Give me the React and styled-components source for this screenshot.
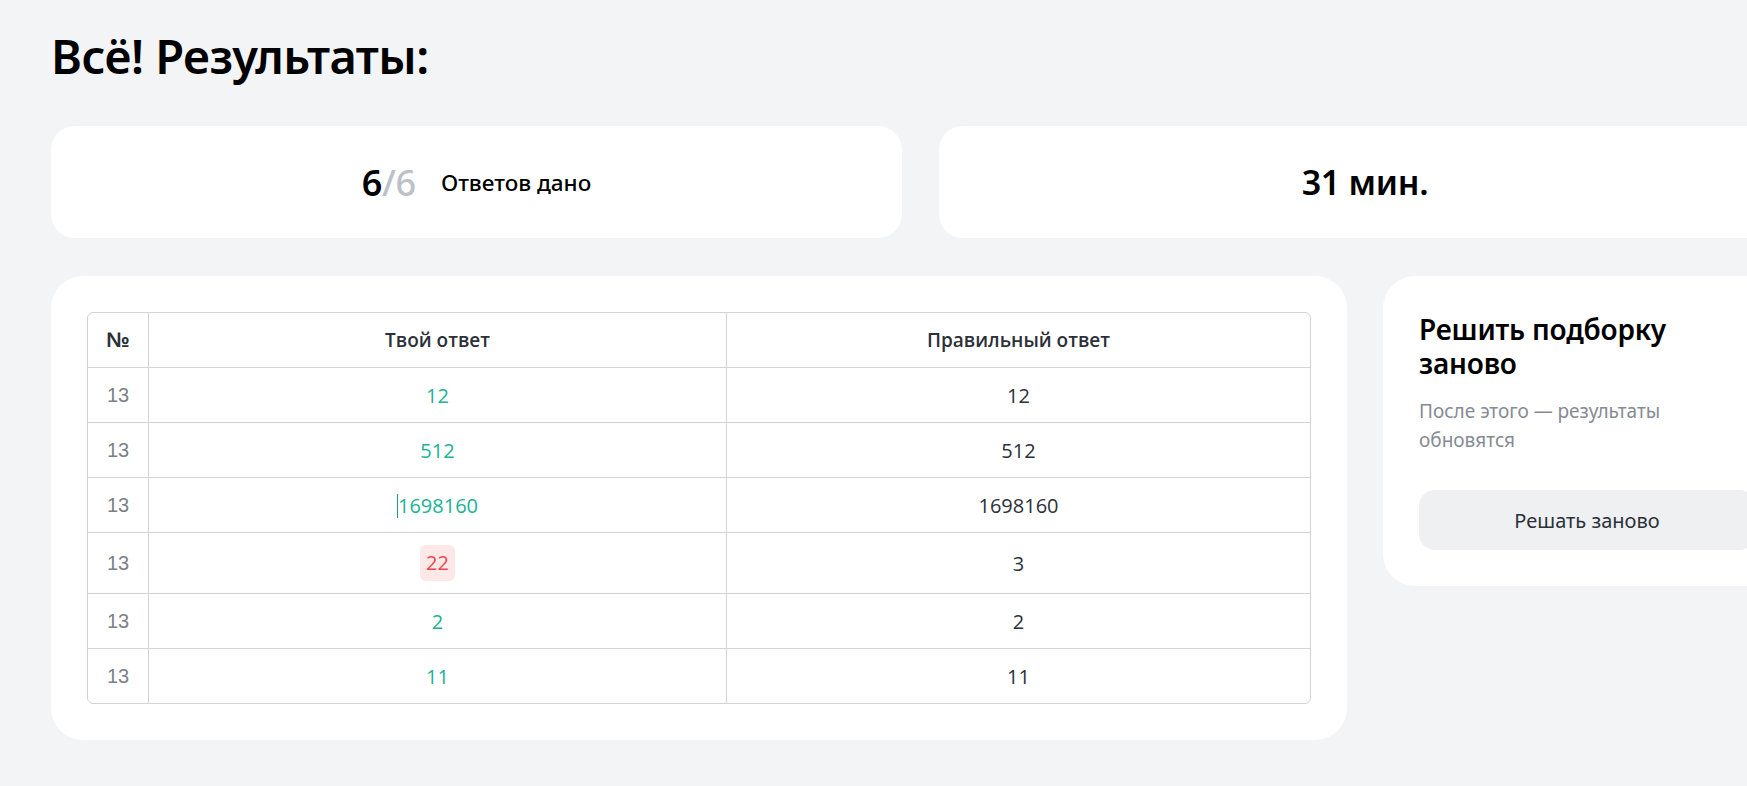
import React from "react";
import styled, { createGlobalStyle } from "styled-components";

const Global = createGlobalStyle`
  html, body { margin: 0; padding: 0; background: #f3f4f6; overflow: hidden; }
  body { font-family: "Noto Sans", "Open Sans", sans-serif; color: #000; }
`;

const Page = styled.div`
  width: 1740px;
  padding: 26px 0 40px 51px;
  box-sizing: content-box;
`;

const Title = styled.h1`
  margin: 0;
  font-family: "Noto Sans", sans-serif;
  font-size: 47px;
  line-height: 60px;
  font-weight: 600;
  letter-spacing: -0.5px;
  color: #000;
`;

const Stats = styled.div`
  margin-top: 40px;
  display: grid;
  grid-template-columns: 851px 852px;
  gap: 37px;
`;

const StatCard = styled.div`
  height: 112px;
  background: #fff;
  border-radius: 24px;
  display: flex;
  align-items: center;
  justify-content: center;
  gap: 25px;
`;

const Big = styled.span`
  font-size: ${(p) => p.$size || 34}px;
  font-weight: 600;
  color: #000;
  letter-spacing: -0.3px;
`;

const Muted = styled.span`
  color: #bcc1c9;
  font-weight: 500;
`;

const StatLabel = styled.span`
  font-size: 22.5px;
  font-weight: 500;
  color: #000;
`;

const Main = styled.div`
  margin-top: 38px;
  display: grid;
  grid-template-columns: 1296px 408px;
  gap: 36px;
  align-items: start;
`;

const Card = styled.div`
  background: #fff;
  border-radius: 32px;
  padding: 36px;
`;

const Table = styled.table`
  width: 100%;
  border-collapse: separate;
  border-spacing: 0;
  border: 1px solid #d0d4d9;
  border-radius: 6px;
  table-layout: fixed;
  font-family: "Open Sans", sans-serif;
`;

const Th = styled.th`
  height: 54px;
  padding: 0;
  font-size: ${(p) => (p.$first ? "21px" : "19px")};
  color: #2c3038;
  text-align: center;
  border-left: ${(p) => (p.$first ? "none" : "1px solid #d0d4d9")};
  font-family: ${(p) => (p.$first ? '"Liberation Sans", Arial, sans-serif' : '"Open Sans", sans-serif')};
  font-weight: ${(p) => (p.$first ? 700 : 600)};
`;

const Td = styled.td`
  height: ${(p) => (p.$tall ? "60px" : "54px")};
  padding: 0;
  font-size: 20px;
  text-align: center;
  border-top: 1px solid #d0d4d9;
  border-left: ${(p) => (p.$first ? "none" : "1px solid #d0d4d9")};
  color: ${(p) => p.$color || "#2c3038"};
  font-family: ${(p) => (p.$first ? '"Liberation Sans", Arial, sans-serif' : '"Open Sans", sans-serif')};
`;

const Wrong = styled.span`
  display: inline-block;
  padding: 0 6px;
  line-height: 36px;
  border-radius: 6px;
  background: #fde8e8;
  color: #e8484f;
`;

const Caret = styled.span`
  display: inline-block;
  width: 1px;
  height: 24px;
  background: #0f9f84;
  vertical-align: -5px;
`;

const SideTitle = styled.h2`
  margin: 0;
  font-family: "Noto Sans", sans-serif;
  font-size: 28px;
  line-height: 34px;
  font-weight: 600;
  color: #000;
  letter-spacing: -0.2px;
`;

const SideText = styled.p`
  margin: 17px 0 0;
  font-size: 19px;
  line-height: 29px;
  color: #858b95;
`;

const Button = styled.button`
  margin-top: 35px;
  width: 100%;
  height: 60px;
  border: none;
  border-radius: 16px;
  background: #eef0f2;
  font-family: "Noto Sans", sans-serif;
  font-size: 20px;
  color: #2c3038;
  cursor: pointer;
`;

const GREEN = "#1ab394";

const rows = [
  { n: 13, a: "12", c: "12" },
  { n: 13, a: "512", c: "512" },
  { n: 13, a: "1698160", c: "1698160", caret: true },
  { n: 13, a: "22", c: "3", wrong: true },
  { n: 13, a: "2", c: "2" },
  { n: 13, a: "11", c: "11" },
];

export default function App() {
  return (
    <>
      <Global />
      <Page>
        <Title>Всё! Результаты:</Title>
        <Stats>
          <StatCard>
            <Big $size={36}>
              6<Muted>/6</Muted>
            </Big>
            <StatLabel>Ответов дано</StatLabel>
          </StatCard>
          <StatCard>
            <Big>31 мин.</Big>
          </StatCard>
        </Stats>
        <Main>
          <Card>
            <Table>
              <colgroup>
                <col style={{ width: 60 }} />
                <col style={{ width: 578 }} />
                <col />
              </colgroup>
              <thead>
                <tr>
                  <Th $first>№</Th>
                  <Th>Твой ответ</Th>
                  <Th>Правильный ответ</Th>
                </tr>
              </thead>
              <tbody>
                {rows.map((r, i) => (
                  <tr key={i}>
                    <Td $first $color="#7b7f86" $tall={r.wrong}>
                      {r.n}
                    </Td>
                    <Td $color={GREEN} $tall={r.wrong}>
                      {r.caret && <Caret />}
                      {r.wrong ? <Wrong>{r.a}</Wrong> : r.a}
                    </Td>
                    <Td $tall={r.wrong}>{r.c}</Td>
                  </tr>
                ))}
              </tbody>
            </Table>
          </Card>
          <Card>
            <SideTitle>Решить подборку заново</SideTitle>
            <SideText>После этого — результаты обновятся</SideText>
            <Button>Решать заново</Button>
          </Card>
        </Main>
      </Page>
    </>
  );
}
